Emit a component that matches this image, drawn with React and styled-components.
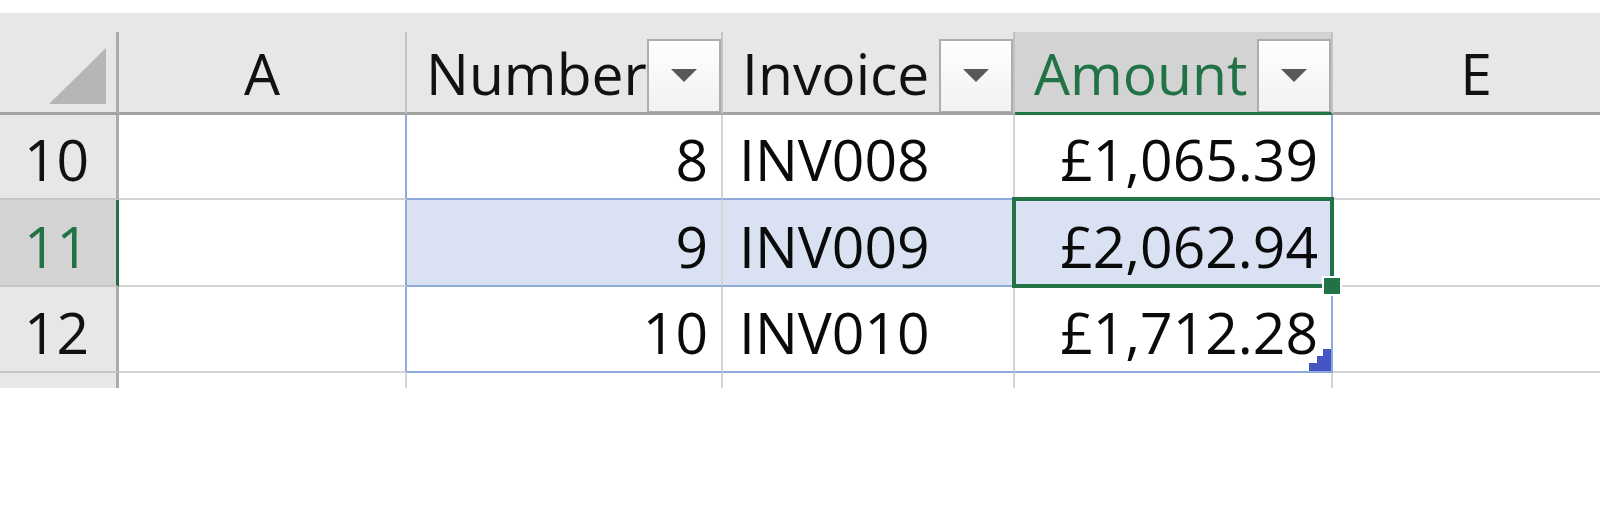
import React from "react";
import styled, { createGlobalStyle, css } from "styled-components";

const GlobalStyle = createGlobalStyle`
  body {
    margin: 0;
    background: #ffffff;
    font-family: "Open Sans", "Noto Sans", sans-serif;
  }
`;

const GREEN = "#217346";
const TABLE_BLUE = "#8ea9db";
const GRID = "#d4d4d4";
const HEAD_BG = "#e7e7e7";
const HEAD_ACTIVE = "#d3d3d3";

const Sheet = styled.div`
  width: 1600px;
  padding-top: 13px;
  overflow: hidden;
`;

const TopBand = styled.div`
  height: 19px;
  background: ${HEAD_BG};
`;

const Grid = styled.div`
  display: grid;
  grid-template-columns: 119px 288px 316px 292px 318px 288px;
  grid-template-rows: 83px 85px 87px 86px 15px;
  width: max-content;
  font-size: 57px;
  color: #0a0a0a;
`;

const Corner = styled.div`
  box-sizing: border-box;
  background: ${HEAD_BG};
  border-right: 3px solid #ababab;
  border-bottom: 3px solid #a3a3a3;
  display: flex;
  align-items: flex-end;
  justify-content: flex-end;
  padding: 0 10px 8px 0;
`;

const ColHead = styled.div`
  box-sizing: border-box;
  display: flex;
  align-items: flex-end;
  justify-content: ${(p) => (p.$filter ? "flex-start" : "center")};
  padding-left: ${(p) => (p.$filter ? "19px" : "0")};
  background: ${(p) => (p.$active ? HEAD_ACTIVE : HEAD_BG)};
  color: ${(p) => (p.$active ? GREEN : "#111")};
  border-right: 2px solid #c3c3c3;
  border-bottom: 3px solid ${(p) => (p.$active ? GREEN : "#a3a3a3")};
  overflow: hidden;
  white-space: nowrap;
`;

const HeadLabel = styled.span`
  flex: 1 1 auto;
  min-width: 0;
  overflow: hidden;
`;

const FilterButton = styled.div`
  flex: none;
  box-sizing: border-box;
  width: 74px;
  height: 74px;
  align-self: flex-end;
  margin-bottom: -1px;
  border: 2px solid #adadad;
  background: linear-gradient(#ffffff, #f1f1f1);
  display: flex;
  align-items: center;
  justify-content: center;

  &::after {
    content: "";
    width: 0;
    height: 0;
    border-left: 13px solid transparent;
    border-right: 13px solid transparent;
    border-top: 13px solid #585858;
    margin-bottom: 2px;
  }
`;

const RowHead = styled.div`
  box-sizing: border-box;
  display: flex;
  align-items: flex-end;
  justify-content: center;
  padding-right: 3px;
  background: ${(p) => (p.$active ? HEAD_ACTIVE : HEAD_BG)};
  color: ${(p) => (p.$active ? GREEN : "#111")};
  border-right: 3px solid ${(p) => (p.$active ? GREEN : "#ababab")};
  border-bottom: ${(p) => (p.$open ? "none" : "2px solid #c6c6c6")};
`;

const Cell = styled.div`
  position: relative;
  box-sizing: border-box;
  display: flex;
  align-items: flex-end;
  justify-content: ${(p) => (p.$right ? "flex-end" : "flex-start")};
  padding: ${(p) => (p.$right ? "0 13px 0 0" : "0 0 0 16px")};
  background: ${(p) => (p.$band ? "#d9e1f2" : "#ffffff")};
  border-right: 2px solid ${(p) => (p.$edge ? TABLE_BLUE : GRID)};
  white-space: nowrap;
  ${(p) =>
    p.$open
      ? css`
          border-bottom: none;
        `
      : css`
          border-bottom: 2px solid ${p.$inTable ? TABLE_BLUE : GRID};
        `}
`;

const ActiveFrame = styled.div`
  position: absolute;
  top: -3px;
  left: -3px;
  right: -3px;
  bottom: -3px;
  border: 4px solid ${GREEN};
  z-index: 2;
  pointer-events: none;
`;

const FillHandle = styled.div`
  position: absolute;
  right: -12px;
  bottom: -12px;
  width: 16px;
  height: 16px;
  background: ${GREEN};
  border: 2px solid #ffffff;
  z-index: 3;
`;

const ResizeMark = styled.svg`
  position: absolute;
  right: 0;
  bottom: 0;
`;

const rows = [
  { n: 10, num: 8, inv: "INV008", amt: "£1,065.39" },
  { n: 11, num: 9, inv: "INV009", amt: "£2,062.94", band: true, active: true },
  { n: 12, num: 10, inv: "INV010", amt: "£1,712.28", last: true },
];

const App = () => {
  return (
    <>
      <GlobalStyle />
      <Sheet>
        <TopBand />
        <Grid>
          <Corner>
            <svg width="57" height="56" viewBox="0 0 57 56">
              <polygon points="57,0 57,56 0,56" fill="#b6b6b6" />
            </svg>
          </Corner>
          <ColHead>A</ColHead>
          <ColHead $filter>
            <HeadLabel>Number</HeadLabel>
            <FilterButton />
          </ColHead>
          <ColHead $filter>
            <HeadLabel>Invoice</HeadLabel>
            <FilterButton />
          </ColHead>
          <ColHead $filter $active>
            <HeadLabel>Amount</HeadLabel>
            <FilterButton />
          </ColHead>
          <ColHead>E</ColHead>

          {rows.map((r) => (
            <React.Fragment key={r.n}>
              <RowHead $active={r.active}>{r.n}</RowHead>
              <Cell $edge />
              <Cell $right $inTable $band={r.band}>
                {r.num}
              </Cell>
              <Cell $inTable $band={r.band}>
                {r.inv}
              </Cell>
              <Cell $right $inTable $edge $band={r.band}>
                {r.amt}
                {r.active && (
                  <ActiveFrame>
                    <FillHandle />
                  </ActiveFrame>
                )}
                {r.last && (
                  <ResizeMark width="22" height="22" viewBox="0 0 22 22">
                    <polygon
                      points="22,0 22,22 0,22 0,14 8,14 8,7 14,7 14,0"
                      fill="#4456c4"
                    />
                  </ResizeMark>
                )}
              </Cell>
              <Cell />
            </React.Fragment>
          ))}

          <RowHead $open />
          <Cell $open />
          <Cell $open />
          <Cell $open />
          <Cell $open />
          <Cell $open />
        </Grid>
      </Sheet>
    </>
  );
};

export default App;
